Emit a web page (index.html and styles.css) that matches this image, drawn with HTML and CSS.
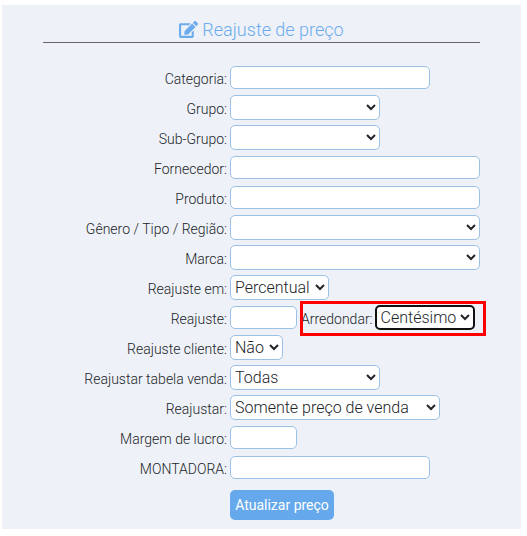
FILE: index.html
```html
<!DOCTYPE html>
<html lang="pt-BR">
<head>
<meta charset="utf-8">
<title>Reajuste de preço</title>
<link rel="stylesheet" href="styles.css">
</head>
<body>
<main class="panel">
  <h1 class="title">
    <svg class="title-icon" viewBox="0 0 576 512" aria-hidden="true"><path d="M402.6 83.2l90.2 90.2c3.8 3.8 3.8 10 0 13.8L274.4 405.6l-92.8 10.3c-12.4 1.4-22.9-9.1-21.5-21.5l10.3-92.8L388.8 83.2c3.8-3.8 10-3.8 13.8 0zm162-22.9l-48.8-48.8c-15.2-15.2-39.9-15.2-55.2 0l-35.4 35.4c-3.8 3.8-3.8 10 0 13.8l90.2 90.2c3.8 3.8 10 3.8 13.8 0l35.4-35.4c15.2-15.3 15.2-40 0-55.2zM384 346.2V448H64V128h229.8c3.2 0 6.2-1.3 8.5-3.5l40-40c7.6-7.6 2.2-20.5-8.5-20.5H48C21.5 64 0 85.5 0 112v352c0 26.5 21.5 48 48 48h352c26.5 0 48-21.5 48-48V306.2c0-10.7-12.9-16-20.5-8.5l-40 40c-2.2 2.3-3.5 5.3-3.5 8.5z"/></svg>
    Reajuste de preço
  </h1>
  <form class="form">
    <div class="row"><label class="label">Categoria:</label><input class="field w-200" type="text"></div>
    <div class="row"><label class="label">Grupo:</label><select class="field pick w-150"><option></option></select></div>
    <div class="row"><label class="label">Sub-Grupo:</label><select class="field pick w-150"><option></option></select></div>
    <div class="row"><label class="label">Fornecedor:</label><input class="field w-250" type="text"></div>
    <div class="row"><label class="label">Produto:</label><input class="field w-250" type="text"></div>
    <div class="row"><label class="label">Gênero / Tipo / Região:</label><select class="field pick w-250"><option></option></select></div>
    <div class="row"><label class="label">Marca:</label><select class="field pick w-250"><option></option></select></div>
    <div class="row"><label class="label">Reajuste em:</label><select class="field pick w-99"><option>Percentual</option></select></div>
    <div class="row"><label class="label">Reajuste:</label><input class="field w-67" type="text">
      <label class="label label-inline">Arredondar:</label><select class="field pick focused w-100"><option>Centésimo</option></select>
      <span class="highlight"></span>
    </div>
    <div class="row"><label class="label">Reajuste cliente:</label><select class="field pick w-53"><option>Não</option></select></div>
    <div class="row"><label class="label">Reajustar tabela venda:</label><select class="field pick w-150"><option>Todas</option></select></div>
    <div class="row"><label class="label">Reajustar:</label><select class="field pick w-210"><option>Somente preço de venda</option></select></div>
    <div class="row"><label class="label">Margem de lucro:</label><input class="field w-67" type="text"></div>
    <div class="row"><label class="label">MONTADORA:</label><input class="field w-200" type="text"></div>
    <div class="actions"><button class="btn" type="button">Atualizar preço</button></div>
  </form>
</main>
</body>
</html>
```
FILE: styles.css
```css
* { box-sizing: border-box; }
html, body { margin: 0; background: #fff; }
body { font-family: Roboto, "Liberation Sans", sans-serif; font-weight: 300; color: #212529; }
.panel { width: 519px; height: 524px; margin: 5px 0 0 2px; background: #eef1f7; padding: 0 41px; }
.title { margin: 0; height: 38px; border-bottom: 1px solid #666; display: flex; align-items: center; justify-content: center; gap: 4px; padding-top: 11px; font-size: 18px; font-weight: 300; color: #6cacee; }
.title-icon { width: 19px; height: 17px; fill: #6cacee; }
.form { padding-top: 19.5px; }
.row { position: relative; display: flex; align-items: center; height: 30px; font-size: 14px; }
.label { width: 184px; padding-top: 2px; text-align: right; white-space: nowrap; margin-right: 3px; }
.label-inline { width: auto; margin: 0 2px 0 4px; }
.field { height: 23px; border: 1px solid #9bc2e6; border-radius: 5px; background: #fff; font-family: inherit; font-weight: 300; font-size: 16px; color: #212529; padding: 0 4px; outline: none; }
.pick { height: 25px; padding: 0; }
.focused { border: 2px solid #111; }
.w-53 { width: 53px; }
.w-67 { width: 67px; }
.w-99 { width: 99px; }
.w-100 { width: 100px; }
.w-150 { width: 150px; }
.w-200 { width: 200px; }
.w-210 { width: 210px; }
.w-250 { width: 250px; }
.highlight { position: absolute; left: 257px; top: -1.5px; width: 186px; height: 35px; border: 3px solid #f00; pointer-events: none; }
.actions { padding: 7.5px 0 0 187px; }
.btn { width: 104px; height: 30px; border: 0; border-radius: 5px; background: #65a9ec; color: #fff; font-family: inherit; font-weight: 400; font-size: 14px; padding: 0; }
```
